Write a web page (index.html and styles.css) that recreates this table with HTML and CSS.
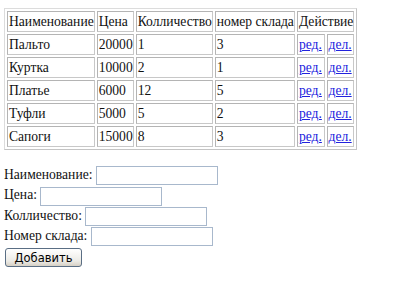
FILE: index.html
```html
<!DOCTYPE html>
<html>
<head>
<meta charset="utf-8">
<title>Склад</title>
<link rel="stylesheet" href="styles.css">
</head>
<body>

<table class="goods">
  <tr>
    <td>Наименование</td>
    <td>Цена</td>
    <td>Колличество</td>
    <td>номер склада</td>
    <td colspan="2">Действие</td>
  </tr>
  <tr><td>Пальто</td><td>20000</td><td>1</td><td>3</td><td><a href="#">ред.</a></td><td><a href="#">дел.</a></td></tr>
  <tr><td>Куртка</td><td>10000</td><td>2</td><td>1</td><td><a href="#">ред.</a></td><td><a href="#">дел.</a></td></tr>
  <tr><td>Платье</td><td>6000</td><td>12</td><td>5</td><td><a href="#">ред.</a></td><td><a href="#">дел.</a></td></tr>
  <tr><td>Туфли</td><td>5000</td><td>5</td><td>2</td><td><a href="#">ред.</a></td><td><a href="#">дел.</a></td></tr>
  <tr><td>Сапоги</td><td>15000</td><td>8</td><td>3</td><td><a href="#">ред.</a></td><td><a href="#">дел.</a></td></tr>
</table>

<form class="add-form">
  <div class="row">Наименование: <input type="text" class="field"></div>
  <div class="row">Цена: <input type="text" class="field"></div>
  <div class="row">Колличество: <input type="text" class="field"></div>
  <div class="row">Номер склада: <input type="text" class="field"></div>
  <div class="row"><button type="button" class="btn">Добавить</button></div>
</form>

</body>
</html>
```

FILE: styles.css
```css
html, body {
  margin: 0;
  padding: 0;
  background: #fff;
}

body {
  padding: 8px 4px;
  font-family: "Liberation Serif", "Times New Roman", serif;
  font-size: 13.6px;
  color: #111;
}

.goods {
  border-collapse: separate;
  border-spacing: 2px;
  border: 1px solid #dcdcdc;
  border-right-color: #c4c4c4;
  border-bottom-color: #c4c4c4;
}

.goods td {
  border: 1px solid #c8c8c8;
  border-top-color: #b4b4b4;
  border-left-color: #b4b4b4;
  padding: 1px 0 1px 1px;
  height: 17px;
  line-height: 17px;
  white-space: nowrap;
}

.goods a {
  color: #2222dd;
}

.add-form {
  margin-top: 15px;
}

.row {
  height: 20.3px;
  line-height: 20px;
}

.field {
  width: 118px;
  height: 17px;
  padding: 0 1px;
  border: 1px solid #a8b8cc;
  vertical-align: middle;
  font: inherit;
}

.btn {
  margin-top: 2px;
  margin-left: 1px;
  width: 77px;
  height: 19px;
  padding: 0;
  font-family: "DejaVu Sans", Tahoma, sans-serif;
  font-size: 11.5px;
  color: #000;
  border: 1px solid #5a6e84;
  border-radius: 3px;
  background: linear-gradient(#ffffff, #ecebe6 70%, #d6d0c5);
  vertical-align: top;
}
```
